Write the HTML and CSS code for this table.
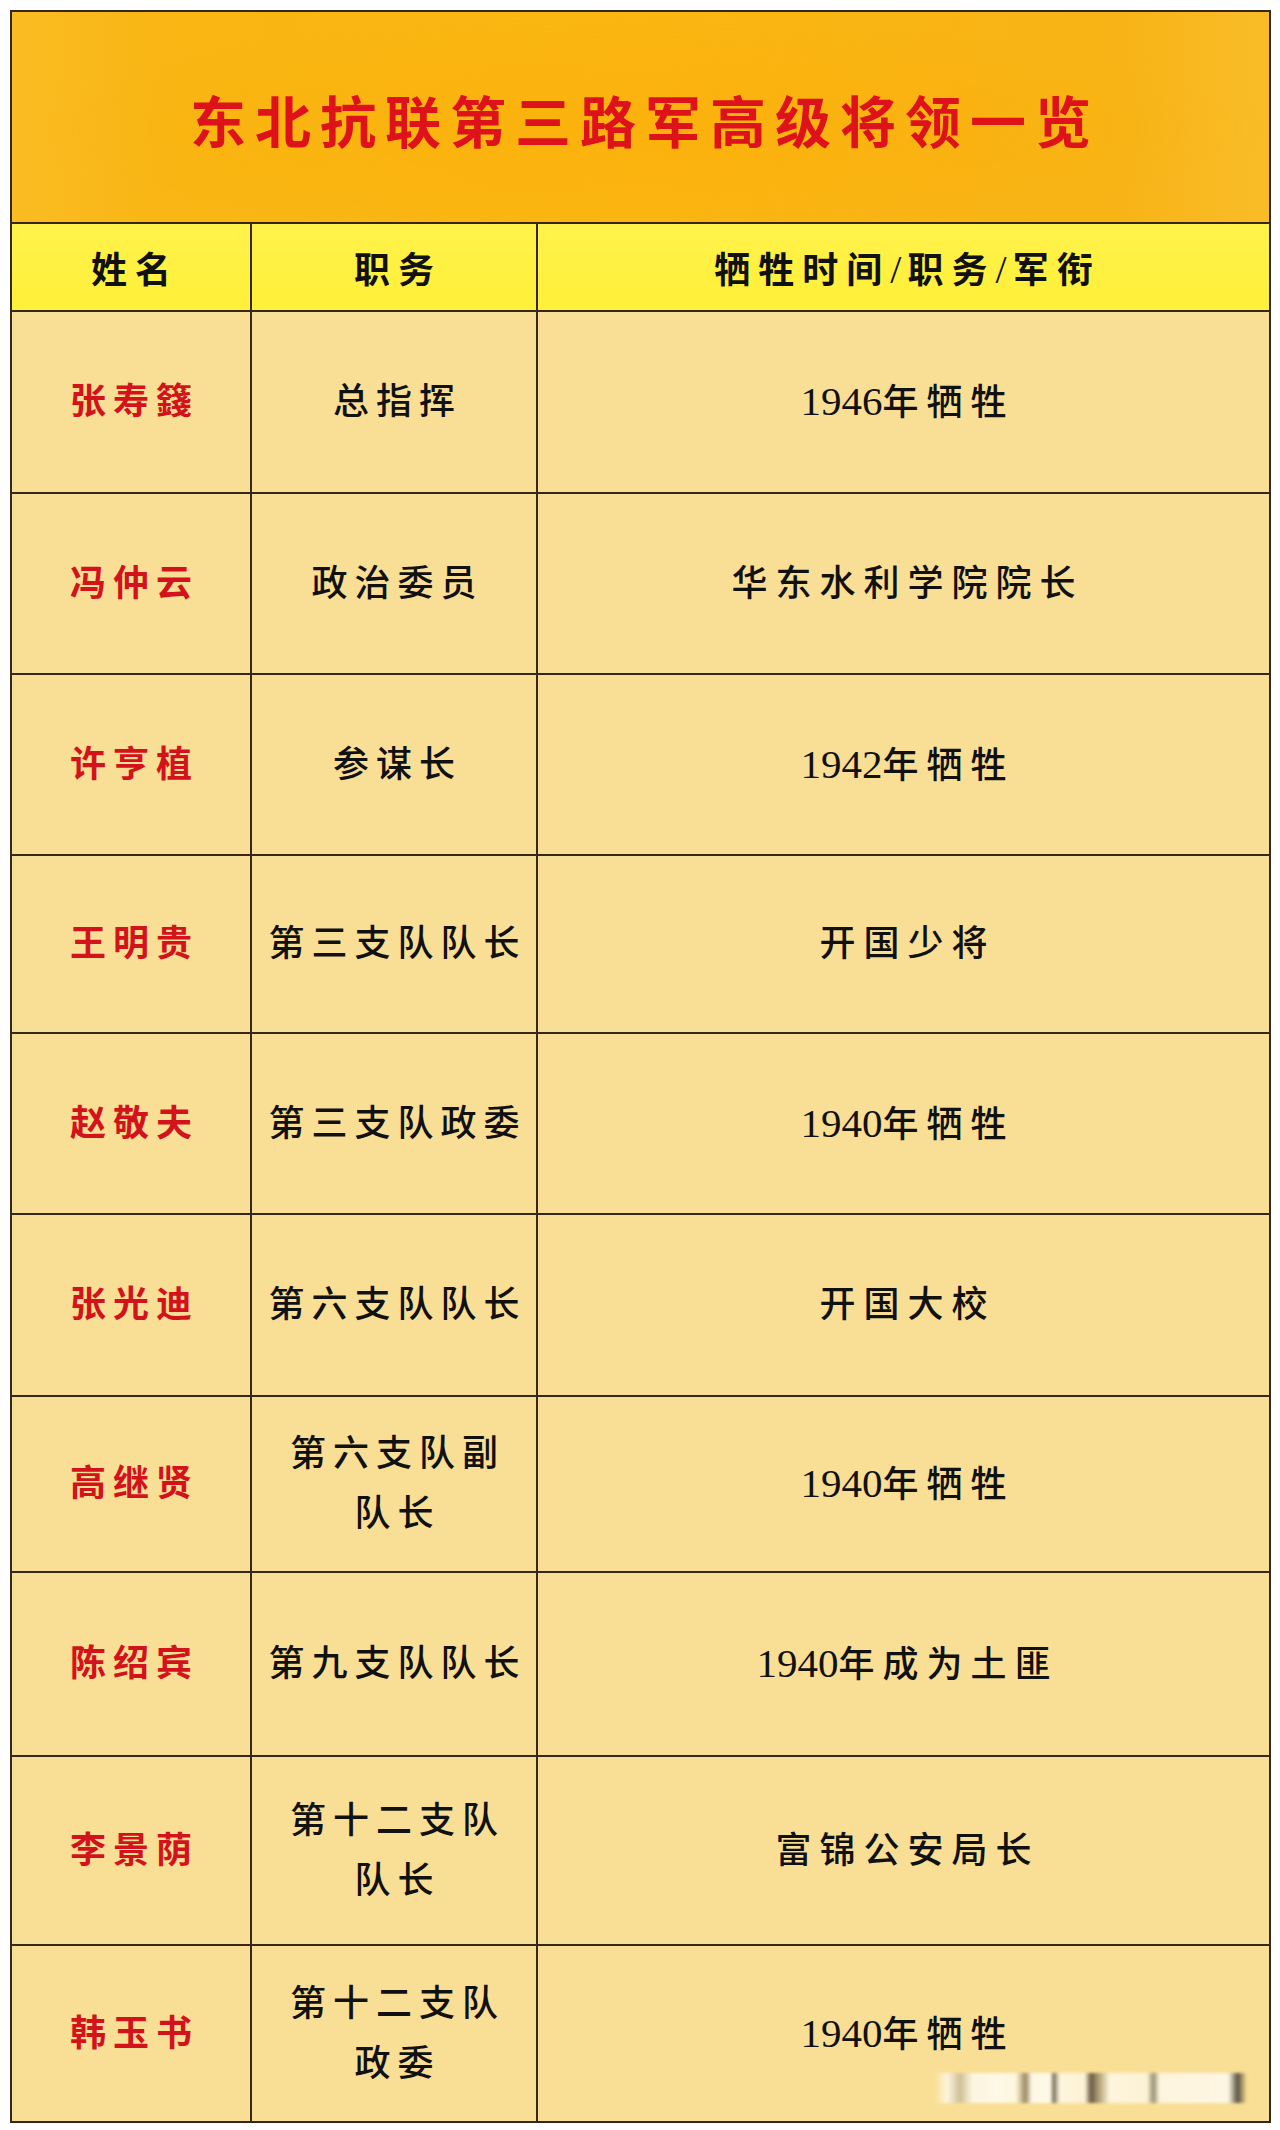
FILE: index.html
```html
<!DOCTYPE html>
<html lang="zh-CN">
<head>
<meta charset="utf-8">
<title>东北抗联第三路军高级将领一览</title>
<link rel="stylesheet" href="styles.css">
</head>
<body>
<main class="page">
  <table class="roster">
    <colgroup>
      <col class="c-name">
      <col class="c-role">
      <col class="c-fate">
    </colgroup>
    <thead>
      <tr class="title-row">
        <th colspan="3" class="title">东北抗联第三路军高级将领一览</th>
      </tr>
      <tr class="head-row">
        <th>姓名</th>
        <th>职务</th>
        <th>牺牲时间<span class="slash">/</span>职务<span class="slash">/</span>军衔</th>
      </tr>
    </thead>
    <tbody>
      <tr>
        <td class="name">张寿籛</td>
        <td class="role">总指挥</td>
        <td class="fate"><span class="num">1946</span>年牺牲</td>
      </tr>
      <tr>
        <td class="name">冯仲云</td>
        <td class="role">政治委员</td>
        <td class="fate">华东水利学院院长</td>
      </tr>
      <tr>
        <td class="name">许亨植</td>
        <td class="role">参谋长</td>
        <td class="fate"><span class="num">1942</span>年牺牲</td>
      </tr>
      <tr>
        <td class="name">王明贵</td>
        <td class="role">第三支队队长</td>
        <td class="fate">开国少将</td>
      </tr>
      <tr>
        <td class="name">赵敬夫</td>
        <td class="role">第三支队政委</td>
        <td class="fate"><span class="num">1940</span>年牺牲</td>
      </tr>
      <tr>
        <td class="name">张光迪</td>
        <td class="role">第六支队队长</td>
        <td class="fate">开国大校</td>
      </tr>
      <tr>
        <td class="name">高继贤</td>
        <td class="role two-line">第六支队副<br>队长</td>
        <td class="fate"><span class="num">1940</span>年牺牲</td>
      </tr>
      <tr>
        <td class="name">陈绍宾</td>
        <td class="role">第九支队队长</td>
        <td class="fate"><span class="num">1940</span>年成为土匪</td>
      </tr>
      <tr>
        <td class="name">李景荫</td>
        <td class="role two-line">第十二支队<br>队长</td>
        <td class="fate">富锦公安局长</td>
      </tr>
      <tr>
        <td class="name">韩玉书</td>
        <td class="role two-line">第十二支队<br>政委</td>
        <td class="fate last-cell"><span class="num">1940</span>年牺牲<span class="watermark" aria-hidden="true"></span></td>
      </tr>
    </tbody>
  </table>
</main>
</body>
</html>
```

FILE: styles.css
```css
html, body {
  margin: 0;
  padding: 0;
  background: #ffffff;
}

.page {
  padding: 10px 11px 10px 10px;
}

.roster {
  width: 1259px;
  border-collapse: collapse;
  table-layout: fixed;
  border: 2px solid #2a2016;
  font-family: "Liberation Serif", "Noto Sans CJK SC", serif;
  color: #111111;
}

.c-name { width: 240px; }
.c-role { width: 286px; }
.c-fate { width: 733px; }

.roster th,
.roster td {
  border: 2px solid #33281a;
  text-align: center;
  vertical-align: middle;
  padding: 0;
}

.title-row th.title {
  height: 208px;
  background:
    radial-gradient(ellipse at 50% 55%, rgba(255, 170, 0, 0.35) 0%, rgba(255, 170, 0, 0) 70%),
    linear-gradient(90deg, #f9bc22 0%, #f9b614 12%, #fbb612 50%, #f8b416 88%, #f9bc28 100%);
  color: #de121a;
  font-size: 56px;
  font-weight: 700;
  letter-spacing: 9px;
  padding-left: 9px;
  padding-top: 2px;
}

.head-row th {
  height: 86px;
  background: linear-gradient(180deg, #fff24a 0%, #fff03a 100%);
  font-size: 36px;
  font-weight: 700;
  letter-spacing: 8px;
  padding-left: 8px;
}

.head-row .slash {
  font-family: "Liberation Serif", serif;
  font-weight: 400;
  font-size: 40px;
  letter-spacing: 6px;
}

.roster tbody td {
  background: #f9df96;
  font-size: 36px;
  font-weight: 500;
  letter-spacing: 8px;
  padding-left: 8px;
  line-height: 60px;
}

.roster tbody tr:nth-child(1)  td { height: 180px; }
.roster tbody tr:nth-child(2)  td { height: 179px; }
.roster tbody tr:nth-child(3)  td { height: 179px; }
.roster tbody tr:nth-child(4)  td { height: 176px; }
.roster tbody tr:nth-child(5)  td { height: 179px; }
.roster tbody tr:nth-child(6)  td { height: 180px; }
.roster tbody tr:nth-child(7)  td { height: 174px; }
.roster tbody tr:nth-child(8)  td { height: 182px; }
.roster tbody tr:nth-child(9)  td { height: 187px; }
.roster tbody tr:nth-child(10) td { height: 175px; }

.roster tbody td.name {
  color: #d3131b;
  font-weight: 700;
  letter-spacing: 7px;
  padding-left: 7px;
}

.roster tbody td.role {
  letter-spacing: 7px;
  padding-left: 7px;
}

.num {
  font-family: "Liberation Serif", serif;
  font-size: 41px;
  font-weight: 400;
  letter-spacing: 0;
}

.last-cell {
  position: relative;
}

.watermark {
  position: absolute;
  right: 22px;
  bottom: 18px;
  width: 312px;
  height: 30px;
  background: linear-gradient(90deg,
    rgba(255,255,255,0) 0%,
    rgba(255,255,255,0.8) 4%,
    rgba(150,150,150,0.5) 8%,
    rgba(255,255,255,0.8) 12%,
    rgba(255,255,255,0.9) 20%,
    rgba(255,250,230,1) 26%,
    rgba(90,80,60,0.7) 29%,
    rgba(255,255,255,0.9) 31%,
    rgba(255,255,255,0.9) 37%,
    rgba(60,60,60,0.8) 38%,
    rgba(255,255,255,0.8) 40%,
    rgba(255,255,255,0.7) 48%,
    rgba(60,50,40,0.9) 50%,
    rgba(150,140,120,0.7) 53%,
    rgba(255,255,255,0.8) 56%,
    rgba(255,255,255,0.7) 68%,
    rgba(90,90,90,0.7) 70%,
    rgba(255,255,255,0.8) 72%,
    rgba(255,255,255,0.85) 94%,
    rgba(40,40,40,0.9) 97%,
    rgba(255,255,255,0) 100%);
  filter: blur(1.5px);
  opacity: 0.85;
}
```
